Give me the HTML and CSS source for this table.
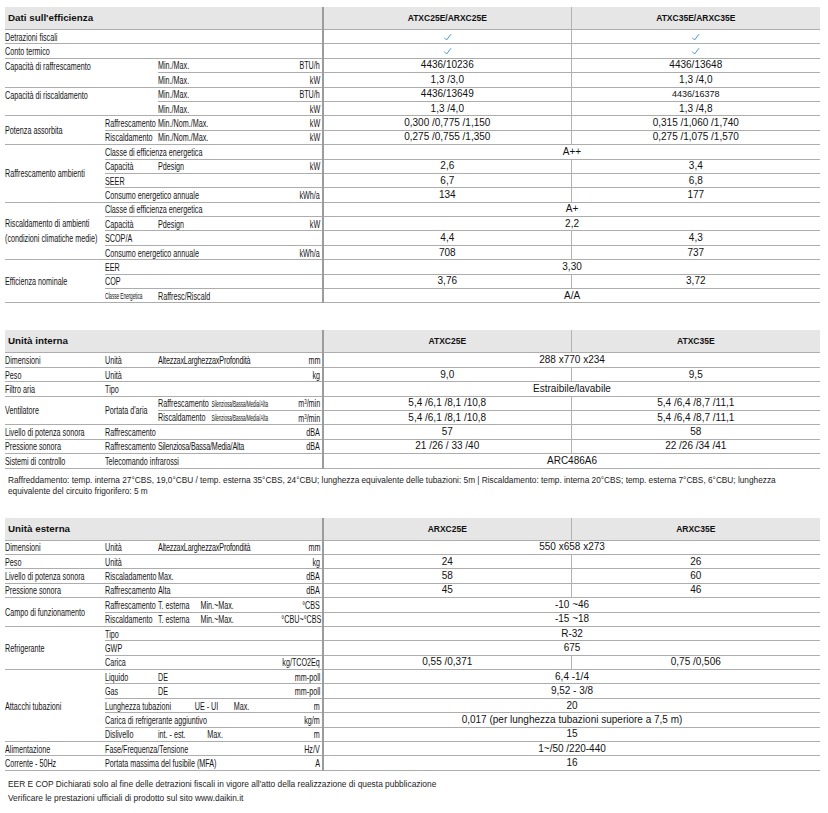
FILE: index.html
```html
<!DOCTYPE html>
<html lang="it">
<head>
<meta charset="utf-8">
<title>Daikin ATXC-E / ARXC-E</title>
<link rel="stylesheet" href="styles.css">
</head>
<body>

<table class="spec">
  <colgroup><col class="ca"><col class="cb"><col class="cc"><col class="cu"><col class="cv1"><col class="cv2"></colgroup>
  <tr class="head"><td colspan="4" class="title">Dati sull'efficienza</td><td class="v1 mh">ATXC25E/ARXC25E</td><td class="v2 mh">ATXC35E/ARXC35E</td></tr>
  <tr><td colspan="4" class="lbl"><span class="t">Detrazioni fiscali</span></td><td class="v1 val"><svg class="chk" viewBox="0 0 9 8"><path d="M1.2 4.6 L3.6 7 L8 1.2"/></svg></td><td class="v2 val"><svg class="chk" viewBox="0 0 9 8"><path d="M1.2 4.6 L3.6 7 L8 1.2"/></svg></td></tr>
  <tr><td colspan="4" class="lbl"><span class="t">Conto termico</span></td><td class="v1 val"><svg class="chk" viewBox="0 0 9 8"><path d="M1.2 4.6 L3.6 7 L8 1.2"/></svg></td><td class="v2 val"><svg class="chk" viewBox="0 0 9 8"><path d="M1.2 4.6 L3.6 7 L8 1.2"/></svg></td></tr>
  <tr><td colspan="2" rowspan="2" class="lbl top"><span class="t">Capacità di raffrescamento</span></td><td class="lbl"><span class="t">Min./Max.</span></td><td class="lbl unit"><span class="t">BTU/h</span></td><td class="v1 val">4436/10236</td><td class="v2 val">4436/13648</td></tr>
  <tr><td class="lbl"><span class="t">Min./Max.</span></td><td class="lbl unit"><span class="t">kW</span></td><td class="v1 val">1,3 /3,0</td><td class="v2 val">1,3 /4,0</td></tr>
  <tr><td colspan="2" rowspan="2" class="lbl top"><span class="t">Capacità di riscaldamento</span></td><td class="lbl"><span class="t">Min./Max.</span></td><td class="lbl unit"><span class="t">BTU/h</span></td><td class="v1 val">4436/13649</td><td class="v2 val sm">4436/16378</td></tr>
  <tr><td class="lbl"><span class="t">Min./Max.</span></td><td class="lbl unit"><span class="t">kW</span></td><td class="v1 val">1,3 /4,0</td><td class="v2 val">1,3 /4,8</td></tr>
  <tr><td rowspan="2" class="lbl"><span class="t">Potenza assorbita</span></td><td class="lbl"><span class="t">Raffrescamento</span></td><td class="lbl"><span class="t">Min./Nom./Max.</span></td><td class="lbl unit"><span class="t">kW</span></td><td class="v1 val">0,300 /0,775 /1,150</td><td class="v2 val">0,315 /1,060 /1,740</td></tr>
  <tr><td class="lbl"><span class="t">Riscaldamento</span></td><td class="lbl"><span class="t">Min./Nom./Max.</span></td><td class="lbl unit"><span class="t">kW</span></td><td class="v1 val">0,275 /0,755 /1,350</td><td class="v2 val">0,275 /1,075 /1,570</td></tr>
  <tr><td rowspan="4" class="lbl"><span class="t">Raffrescamento ambienti</span></td><td colspan="3" class="lbl"><span class="t">Classe di efficienza energetica</span></td><td colspan="2" class="v1 val">A++</td></tr>
  <tr><td class="lbl"><span class="t">Capacità</span></td><td class="lbl"><span class="t">Pdesign</span></td><td class="lbl unit"><span class="t">kW</span></td><td class="v1 val">2,6</td><td class="v2 val">3,4</td></tr>
  <tr><td colspan="3" class="lbl"><span class="t">SEER</span></td><td class="v1 val">6,7</td><td class="v2 val">6,8</td></tr>
  <tr><td colspan="2" class="lbl"><span class="t">Consumo energetico annuale</span></td><td class="lbl unit"><span class="t">kWh/a</span></td><td class="v1 val">134</td><td class="v2 val">177</td></tr>
  <tr><td rowspan="4" class="lbl two"><span class="t">Riscaldamento di ambienti<br>(condizioni climatiche medie)</span></td><td colspan="3" class="lbl"><span class="t">Classe di efficienza energetica</span></td><td colspan="2" class="v1 val">A+</td></tr>
  <tr><td class="lbl"><span class="t">Capacità</span></td><td class="lbl"><span class="t">Pdesign</span></td><td class="lbl unit"><span class="t">kW</span></td><td colspan="2" class="v1 val">2,2</td></tr>
  <tr><td colspan="3" class="lbl"><span class="t">SCOP/A</span></td><td class="v1 val">4,4</td><td class="v2 val">4,3</td></tr>
  <tr><td colspan="2" class="lbl"><span class="t">Consumo energetico annuale</span></td><td class="lbl unit"><span class="t">kWh/a</span></td><td class="v1 val">708</td><td class="v2 val">737</td></tr>
  <tr><td rowspan="3" class="lbl"><span class="t">Efficienza nominale</span></td><td colspan="3" class="lbl"><span class="t">EER</span></td><td colspan="2" class="v1 val">3,30</td></tr>
  <tr><td colspan="3" class="lbl"><span class="t">COP</span></td><td class="v1 val">3,76</td><td class="v2 val">3,72</td></tr>
  <tr><td class="lbl"><span class="t"><span class="sq sq-ce">Classe Energetica</span></span></td><td colspan="2" class="lbl"><span class="t">Raffresc/Riscald</span></td><td colspan="2" class="v1 val">A/A</td></tr>
</table>

<table class="spec gap">
  <colgroup><col class="ca"><col class="cb"><col class="cc"><col class="cu"><col class="cv1"><col class="cv2"></colgroup>
  <tr class="head"><td colspan="4" class="title">Unità interna</td><td class="v1 mh">ATXC25E</td><td class="v2 mh">ATXC35E</td></tr>
  <tr><td class="lbl"><span class="t">Dimensioni</span></td><td class="lbl"><span class="t">Unità</span></td><td class="lbl"><span class="t tight">AltezzaxLarghezzaxProfondità</span></td><td class="lbl unit"><span class="t">mm</span></td><td colspan="2" class="v1 val">288 x770 x234</td></tr>
  <tr><td class="lbl"><span class="t">Peso</span></td><td class="lbl"><span class="t">Unità</span></td><td class="lbl"></td><td class="lbl unit"><span class="t">kg</span></td><td class="v1 val">9,0</td><td class="v2 val">9,5</td></tr>
  <tr><td class="lbl"><span class="t">Filtro aria</span></td><td colspan="3" class="lbl"><span class="t">Tipo</span></td><td colspan="2" class="v1 val">Estraibile/lavabile</td></tr>
  <tr><td rowspan="2" class="lbl"><span class="t">Ventilatore</span></td><td rowspan="2" class="lbl"><span class="t">Portata d'aria</span></td><td class="lbl"><span class="t"><span class="w78">Raffrescamento</span><span class="sq sq-sb">Silenziosa/Bassa/Media/Alta</span></span></td><td class="lbl unit"><span class="t">m<sup>3</sup>/min</span></td><td class="v1 val">5,4 /6,1 /8,1 /10,8</td><td class="v2 val">5,4 /6,4 /8,7 /11,1</td></tr>
  <tr><td class="lbl"><span class="t"><span class="w78">Riscaldamento</span><span class="sq sq-sb">Silenziosa/Bassa/Media/Alta</span></span></td><td class="lbl unit"><span class="t">m<sup>3</sup>/min</span></td><td class="v1 val">5,4 /6,1 /8,1 /10,8</td><td class="v2 val">5,4 /6,4 /8,7 /11,1</td></tr>
  <tr><td class="lbl"><span class="t">Livello di potenza sonora</span></td><td colspan="2" class="lbl"><span class="t">Raffrescamento</span></td><td class="lbl unit"><span class="t">dBA</span></td><td class="v1 val">57</td><td class="v2 val">58</td></tr>
  <tr><td class="lbl"><span class="t">Pressione sonora</span></td><td class="lbl"><span class="t">Raffrescamento</span></td><td class="lbl"><span class="t tight">Silenziosa/Bassa/Media/Alta</span></td><td class="lbl unit"><span class="t">dBA</span></td><td class="v1 val">21 /26 / 33 /40</td><td class="v2 val">22 /26 /34 /41</td></tr>
  <tr><td class="lbl"><span class="t">Sistemi di controllo</span></td><td colspan="3" class="lbl"><span class="t">Telecomando infrarossi</span></td><td colspan="2" class="v1 val">ARC486A6</td></tr>
</table>

<p class="note">Raffreddamento: temp. interna 27°CBS, 19,0°CBU / temp. esterna 35°CBS, 24°CBU; lunghezza equivalente delle tubazioni: 5m | Riscaldamento: temp. interna 20°CBS; temp. esterna 7°CBS, 6°CBU; lunghezza<br>equivalente del circuito frigorifero: 5 m</p>

<table class="spec gap2">
  <colgroup><col class="ca"><col class="cb"><col class="cc"><col class="cu"><col class="cv1"><col class="cv2"></colgroup>
  <tr class="head"><td colspan="4" class="title">Unità esterna</td><td class="v1 mh">ARXC25E</td><td class="v2 mh">ARXC35E</td></tr>
  <tr><td class="lbl"><span class="t">Dimensioni</span></td><td class="lbl"><span class="t">Unità</span></td><td class="lbl"><span class="t tight">AltezzaxLarghezzaxProfondità</span></td><td class="lbl unit"><span class="t">mm</span></td><td colspan="2" class="v1 val">550 x658 x273</td></tr>
  <tr><td class="lbl"><span class="t">Peso</span></td><td class="lbl"><span class="t">Unità</span></td><td class="lbl"></td><td class="lbl unit"><span class="t">kg</span></td><td class="v1 val">24</td><td class="v2 val">26</td></tr>
  <tr><td class="lbl"><span class="t">Livello di potenza sonora</span></td><td class="lbl"><span class="t">Riscaladamento</span></td><td class="lbl"><span class="t">Max.</span></td><td class="lbl unit"><span class="t">dBA</span></td><td class="v1 val">58</td><td class="v2 val">60</td></tr>
  <tr><td class="lbl"><span class="t">Pressione sonora</span></td><td class="lbl"><span class="t">Raffrescamento</span></td><td class="lbl"><span class="t">Alta</span></td><td class="lbl unit"><span class="t">dBA</span></td><td class="v1 val">45</td><td class="v2 val">46</td></tr>
  <tr><td rowspan="2" class="lbl"><span class="t">Campo di funzionamento</span></td><td class="lbl"><span class="t">Raffrescamento</span></td><td class="lbl"><span class="t"><span class="w62">T. esterna</span>Min.~Max.</span></td><td class="lbl unit"><span class="t">°CBS</span></td><td colspan="2" class="v1 val">-10 ~46</td></tr>
  <tr><td class="lbl"><span class="t">Riscaldamento</span></td><td class="lbl"><span class="t"><span class="w62">T. esterna</span>Min.~Max.</span></td><td class="lbl unit"><span class="t">°CBU~°CBS</span></td><td colspan="2" class="v1 val">-15 ~18</td></tr>
  <tr><td rowspan="3" class="lbl"><span class="t">Refrigerante</span></td><td colspan="3" class="lbl"><span class="t">Tipo</span></td><td colspan="2" class="v1 val">R-32</td></tr>
  <tr><td colspan="3" class="lbl"><span class="t">GWP</span></td><td colspan="2" class="v1 val">675</td></tr>
  <tr><td colspan="2" class="lbl"><span class="t">Carica</span></td><td class="lbl unit"><span class="t">kg/TCO2Eq</span></td><td class="v1 val">0,55 /0,371</td><td class="v2 val">0,75 /0,506</td></tr>
  <tr><td rowspan="5" class="lbl"><span class="t">Attacchi tubazioni</span></td><td class="lbl"><span class="t">Liquido</span></td><td class="lbl"><span class="t">DE</span></td><td class="lbl unit"><span class="t">mm-poll</span></td><td colspan="2" class="v1 val">6,4 -1/4</td></tr>
  <tr><td class="lbl"><span class="t">Gas</span></td><td class="lbl"><span class="t">DE</span></td><td class="lbl unit"><span class="t">mm-poll</span></td><td colspan="2" class="v1 val">9,52 - 3/8</td></tr>
  <tr><td colspan="2" class="lbl"><span class="t"><span class="w131">Lunghezza tubazioni</span><span class="w57">UE - UI</span>Max.</span></td><td class="lbl unit"><span class="t">m</span></td><td colspan="2" class="v1 val">20</td></tr>
  <tr><td colspan="2" class="lbl"><span class="t">Carica di refrigerante aggiuntivo</span></td><td class="lbl unit"><span class="t">kg/m</span></td><td colspan="2" class="v1 val">0,017 (per lunghezza tubazioni superiore a 7,5 m)</td></tr>
  <tr><td class="lbl"><span class="t">Dislivello</span></td><td class="lbl"><span class="t"><span class="w72">int. - est.</span>Max.</span></td><td class="lbl unit"><span class="t">m</span></td><td colspan="2" class="v1 val">15</td></tr>
  <tr><td class="lbl"><span class="t">Alimentazione</span></td><td colspan="2" class="lbl"><span class="t">Fase/Frequenza/Tensione</span></td><td class="lbl unit"><span class="t">Hz/V</span></td><td colspan="2" class="v1 val">1~/50 /220-440</td></tr>
  <tr><td class="lbl"><span class="t">Corrente - 50Hz</span></td><td colspan="2" class="lbl"><span class="t">Portata massima del fusibile (MFA)</span></td><td class="lbl unit"><span class="t">A</span></td><td colspan="2" class="v1 val">16</td></tr>
</table>

<p class="foot">EER E COP Dichiarati solo al fine delle detrazioni fiscali in vigore all'atto della realizzazione di questa pubblicazione<br>Verificare le prestazioni ufficiali di prodotto sul sito www.daikin.it</p>

</body>
</html>
```

FILE: styles.css
```css
html, body {
  margin: 0;
  background: #ffffff;
}
body {
  padding: 7px 8px 0 5px;
  font-family: "Liberation Sans", Arial, sans-serif;
  color: #1c1c1c;
}

.spec {
  border-collapse: collapse;
  table-layout: fixed;
  width: 815px;
}
.spec col.ca { width: 100px; }
.spec col.cb { width: 53px; }
.spec col.cc { width: 105px; }
.spec col.cu { width: 60px; }
.spec col.cv1 { width: 248px; }
.spec col.cv2 { width: 249px; }

.spec td {
  padding: 0;
  height: 13.4px;
  line-height: 12px;
  border-bottom: 1px solid #adadad;
  white-space: nowrap;
  vertical-align: middle;
  overflow: visible;
}

.spec tr.head td {
  height: 22px;
  background: #e6e6e6;
  font-weight: bold;
}
.spec .title {
  font-size: 9.8px;
  padding-left: 3px;
  color: #111;
}
.spec .mh {
  text-align: center;
  font-size: 8.5px;
  color: #111;
}

/* condensed label text */
.lbl {
  font-size: 10.5px;
  padding-left: 3px;
  color: #141414;
}
.lbl .t {
  display: inline-block;
  transform: scaleX(0.685);
  transform-origin: 0 50%;
}
.spec .lbl.top {
  vertical-align: top;
}
.lbl.top .t {
  line-height: 14.4px;
}
.lbl.unit {
  text-align: right;
  padding-left: 0;
  padding-right: 2px;
}
.lbl.unit .t {
  transform-origin: 100% 50%;
}
.lbl.two .t {
  line-height: 14.5px;
}
.lbl sup {
  font-size: 6.5px;
  line-height: 0;
  vertical-align: 3px;
}

.v1 { border-left: 2px solid #9c9c9c; }
.v2 { border-left: 1px solid #b3b3b3; }

.val {
  text-align: center;
  font-size: 10px;
  color: #111;
}
.val.sm { font-size: 9px; }

.chk {
  width: 9px;
  height: 8px;
  vertical-align: -1px;
}
.chk path {
  fill: none;
  stroke: #4b9ad8;
  stroke-width: 1;
}

/* extra-squeezed small labels */
.sq {
  display: inline-block;
  transform-origin: 0 50%;
  letter-spacing: -0.2px;
}
.sq-sb {
  font-size: 9.5px;
  transform: scaleX(0.72);
}
.sq-ce {
  font-size: 9.5px;
  transform: scaleX(0.74);
}
.tight {
  letter-spacing: -0.25px;
}
.w78 { display: inline-block; width: 78px; }
.w62 { display: inline-block; width: 62px; }
.w131 { display: inline-block; width: 131px; }
.w57 { display: inline-block; width: 57px; }
.w72 { display: inline-block; width: 72px; }

.gap { margin-top: 27px; }
.gap2 { margin-top: 21px; }

.note {
  margin: 6px 0 0 3px;
  font-size: 8.27px;
  line-height: 11px;
  white-space: nowrap;
  color: #1c1c1c;
}
.foot {
  margin: 6px 0 0 3px;
  font-size: 8.4px;
  line-height: 14px;
  white-space: nowrap;
  color: #1c1c1c;
}
```
